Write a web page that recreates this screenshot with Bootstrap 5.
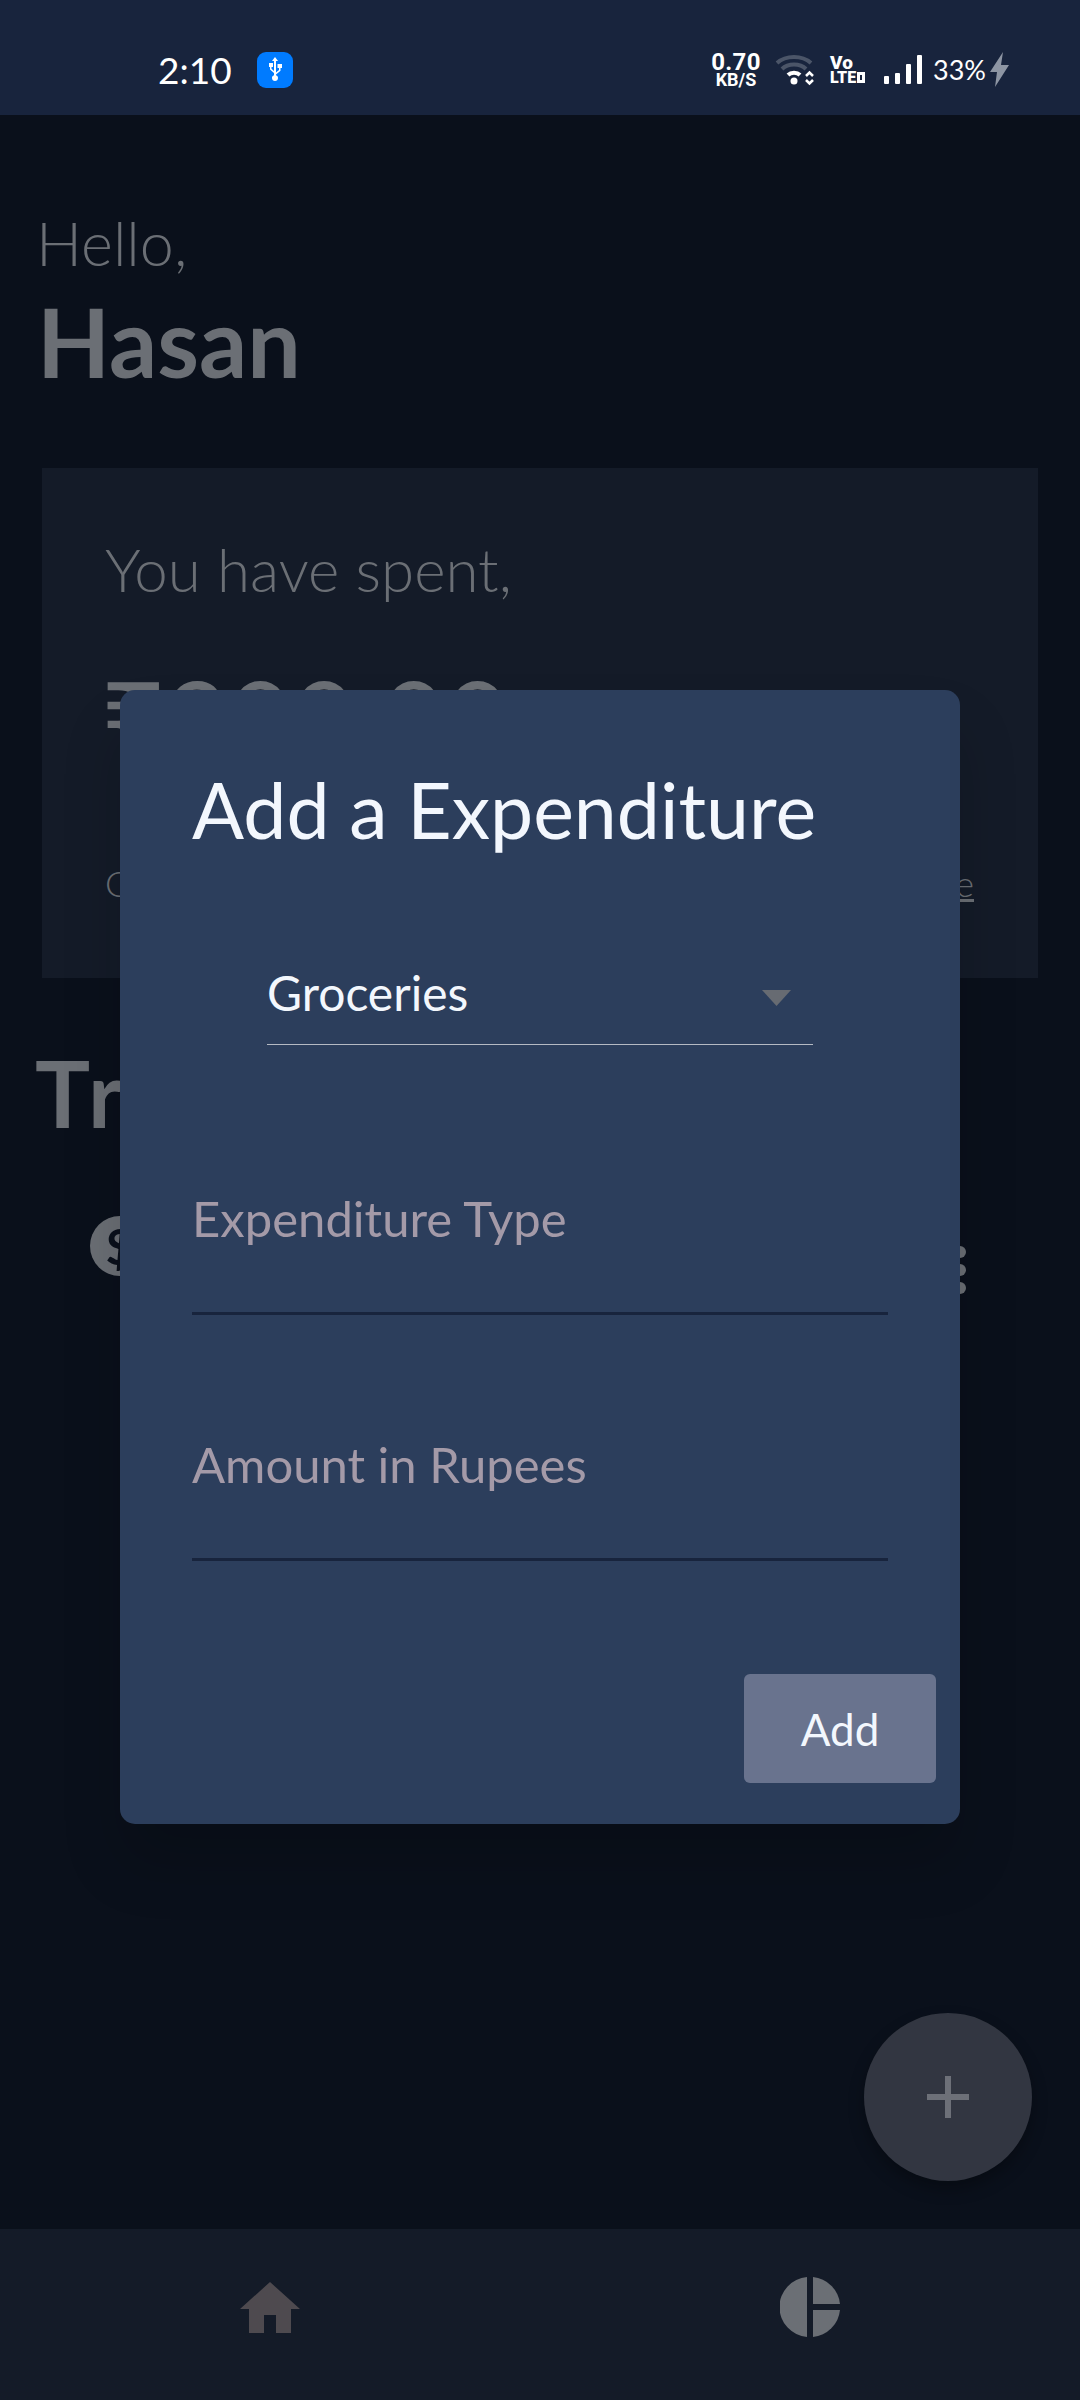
<!DOCTYPE html>
<html lang="en">

<head>
    <meta charset="UTF-8">
    <meta name="viewport" content="width=device-width, initial-scale=1.0">
    <title>Expenditure Tracker</title>

    <link href="https://cdn.jsdelivr.net/npm/bootstrap@5.3.0/dist/css/bootstrap.min.css" rel="stylesheet">

    <style>
        body {
            font-family: 'Lato', 'Noto Sans', sans-serif;
            background-color: #0a101b;
            color: #6b6f75;
            width: 1080px;
            height: 2400px;
            overflow: hidden;
            position: relative;
        }

        /* Status bar */
        .status-strip {
            height: 115px;
            background-color: #18243d;
            color: #fff;
            flex-shrink: 0;
            padding: 24px 0 0 158px;
        }

        .clock-text { font-size: 37px; width: 99px; line-height: 1; }
        .usb-badge { width: 36px; height: 36px; border-radius: 9px; background-color: #007bff; }
        .status-right { margin-left: 412px; }
        .speed-box { width: 62px; font-family: 'Roboto', sans-serif; font-weight: 700; text-align: center; line-height: 1; }
        .speed-box .speed-num { font-size: 24px; display: block; line-height: 20px; letter-spacing: .3px; }
        .speed-box .speed-unit { font-size: 18px; display: block; line-height: 16px; }
        .volte-box { width: 38px; margin-left: 13px; font-family: 'Roboto', sans-serif; font-weight: 900; line-height: 1; }
        .volte-box .volte-top { font-size: 19px; display: block; line-height: 16px; }
        .volte-box .volte-low { font-size: 16px; display: flex; align-items: center; line-height: 14px; }
        .volte-dot { width: 8px; height: 11px; border: 3px solid #fff; margin-left: 1px; }
        .battery-text { font-size: 27px; font-weight: 400; margin-left: 11px; width: 57px; line-height: 1; }

        /* Page behind the dialog */
        .greet-text { font-size: 61px; font-weight: 300; line-height: 72px; margin: 92px 0 0 36px; }
        .name-text { font-size: 95px; font-weight: 700; line-height: 100px; margin: 12px 0 0 37px; }

        .spend-panel {
            background-color: #141b28;
            margin: 77px 42px 0 42px;
            height: 510px;
            padding: 66px 64px 0 63px;
        }

        .spend-label { font-size: 60px; font-weight: 300; line-height: 70px; }
        .spend-amount { font-size: 110px; font-weight: 400; line-height: 130px; margin: 49px 0 0 -4px; }
        .spend-foot { font-size: 36px; font-weight: 300; margin-top: 78px; line-height: 44px; }
        .spend-foot a { color: #6b6f75; }

        .section-title { font-size: 92px; font-weight: 700; letter-spacing: 7px; line-height: 100px; margin: 65px 0 0 35px; }

        .expense-row { margin: 73px 114px 0 90px; }
        .coin-icon {
            width: 60px;
            height: 60px;
            border-radius: 50%;
            background-color: #6b6f75;
            color: #0a101b;
            font-size: 50px;
            font-weight: 700;
            line-height: 60px;
            text-align: center;
        }
        .dots-icon { display: flex; flex-direction: column; gap: 6px; margin-top: 30px; }
        .dots-icon span { width: 12px; height: 12px; border-radius: 50%; background-color: #6b6f75; }

        /* Bottom navigation */
        .tab-strip {
            height: 171px;
            background-color: #141b28;
            flex-shrink: 0;
            padding: 0 240px 15px;
        }

        /* Floating add button */
        .fab-add {
            position: absolute;
            left: 864px;
            top: 2013px;
            width: 168px;
            height: 168px;
            border-radius: 50%;
            background-color: #323641;
            box-shadow: 0 8px 16px rgba(0, 0, 0, .3);
        }

        /* Dialog */
        .expense-dialog {
            position: absolute;
            left: 120px;
            top: 690px;
            width: 840px;
            height: 1134px;
            background-color: #2c3e5c;
            border: 0;
            border-radius: 15px;
            box-shadow: 0 40px 60px rgba(0, 0, 0, .16);
            padding: 74px 72px 0 72px;
        }

        .dialog-title { font-size: 77px; font-weight: 400; color: #f3f7fd; line-height: 90px; margin: 0; }

        .type-select.form-select {
            width: 546px;
            margin: 97px 0 0 75px;
            height: 94px;
            padding: 0 0 10px;
            font-size: 48px;
            color: #f3f7fd;
            border: 0;
            border-bottom: 1px solid #b5bac3;
            border-radius: 0;
            background-color: transparent;
            background-image: url("data:image/svg+xml,%3csvg xmlns='http://www.w3.org/2000/svg' viewBox='0 0 29 16'%3e%3cpath fill='%23676b72' d='M0 0h29L14.500 16z'/%3e%3c/svg%3e");
            background-size: 29px 16px;
            background-position: right 22px center;
            box-shadow: none;
        }

        .line-input.form-control {
            width: 696px;
            height: 140px;
            margin-top: 106px;
            padding: 0 0 51px;
            font-size: 49px;
            color: #f3f7fd;
            background-color: transparent;
            border: 0;
            border-bottom: 3px solid #18243d;
            border-radius: 0;
            box-shadow: none;
        }

        .type-select + .line-input.form-control { margin-top: 130px; }
        .line-input.form-control::placeholder { color: #a49aa8; opacity: 1; }

        .add-btn.btn {
            width: 192px;
            height: 109px;
            margin: 113px -48px 0 0;
            font-size: 44px;
            color: #f3f7fd;
            background-color: #69738e;
            border: 0;
            border-radius: 6px;
        }
    </style>
</head>

<body class="d-flex flex-column">
    <!-- Phone status bar -->
    <div class="status-strip d-flex align-items-center">
        <span class="clock-text">2:10</span>
        <span class="usb-badge d-flex align-items-center justify-content-center">
            <svg width="16" height="26" viewBox="0 0 16 26" fill="#fff">
                <path d="M8 0l3 4H9v14.300c1.300.4 2 1.500 2 2.700 0 1.700-1.300 3-3 3s-3-1.300-3-3c0-1.200.7-2.300 2-2.700V16l-4-3.500V10H2V6h4v4H4.500v1.800L7 14V4H5z" />
                <path d="M9 15.500l3-2.500v-2h-1.500V7H15v4h-1.500v2.800L9 17.500z" />
            </svg>
        </span>
        <div class="status-right d-flex align-items-center">
            <span class="speed-box"><span class="speed-num">0.70</span><span class="speed-unit">KB/S</span></span>
            <svg class="ms-2" width="42" height="32" viewBox="0 0 42 32" fill="none">
                <path d="M2 9C11 1 27 1 36 9" stroke="#4b5568" stroke-width="4" />
                <path d="M7 15C13 9 25 9 31 15" stroke="#4b5568" stroke-width="4" />
                <path d="M13 21C16 18 22 18 25 21" stroke="#fff" stroke-width="4" />
                <circle cx="19" cy="27" r="3.500" fill="#fff" />
                <path d="M31 22l3.500-3.500L38 22M31 26l3.500 3.500L38 26" stroke="#fff" stroke-width="2.500" />
            </svg>
            <span class="volte-box"><span class="volte-top">Vo</span><span class="volte-low">LTE<span class="volte-dot"></span></span></span>
            <svg class="ms-3" width="38" height="29" viewBox="0 0 38 29" fill="#fff">
                <rect x="0" y="21" width="5" height="8" rx="1" />
                <rect x="11" y="18" width="5" height="11" rx="1" />
                <rect x="22" y="9" width="5" height="20" rx="1" />
                <rect x="33" y="0" width="5" height="29" rx="1" />
            </svg>
            <span class="battery-text">33%</span>
            <svg width="19" height="35" viewBox="0 0 19 35" fill="#8d95a3">
                <path d="M13 0L0 20h7L5 35l14-22h-8z" />
            </svg>
        </div>
    </div>

    <!-- Page content, dimmed behind the dialog -->
    <main class="flex-grow-1">
        <div class="greet-text">Hello,</div>
        <div class="name-text">Hasan</div>

        <div class="spend-panel">
            <div class="spend-label">You have spent,</div>
            <div class="spend-amount">₹300.00</div>
            <div class="spend-foot d-flex justify-content-between">
                <span>Current month</span>
                <a href="#">See more</a>
            </div>
        </div>

        <div class="section-title">Transactions</div>

        <div class="expense-row d-flex justify-content-between align-items-start">
            <div class="coin-icon">$</div>
            <div class="dots-icon"><span></span><span></span><span></span></div>
        </div>
    </main>

    <!-- Bottom navigation -->
    <nav class="tab-strip d-flex justify-content-between align-items-center">
        <svg width="60" height="51" viewBox="0 0 60 51" fill="#4e4a4f">
            <path d="M30 0L60 27H51V51H36V33H24V51H9V27H0z" />
        </svg>
        <svg width="60" height="60" viewBox="0 0 60 60" fill="#6b6f75">
            <path d="M27 0.100A30 30 0 0 0 27 59.900z" />
            <path d="M33 0.100A30 30 0 0 1 60 27H33z" />
            <path d="M33 59.900A30 30 0 0 0 60 33H33z" />
        </svg>
    </nav>

    <!-- Floating add button -->
    <div class="fab-add d-flex align-items-center justify-content-center">
        <svg width="42" height="42" viewBox="0 0 42 42" fill="#6d7078">
            <path d="M18 0h6v18h18v6H24v18h-6V24H0v-6h18z" />
        </svg>
    </div>

    <!-- Add expenditure dialog -->
    <div class="card expense-dialog">
        <h2 class="dialog-title">Add a Expenditure</h2>
        <select class="form-select type-select" aria-label="Category">
            <option selected>Groceries</option>
            <option>Rent</option>
            <option>Travel</option>
        </select>
        <input type="text" class="form-control line-input" placeholder="Expenditure Type">
        <input type="text" class="form-control line-input" placeholder="Amount in Rupees">
        <div class="d-flex justify-content-end">
            <button type="button" class="btn add-btn">Add</button>
        </div>
    </div>

    <script src="https://cdn.jsdelivr.net/npm/bootstrap@5.3.0/dist/js/bootstrap.bundle.min.js"></script>
</body>

</html>
